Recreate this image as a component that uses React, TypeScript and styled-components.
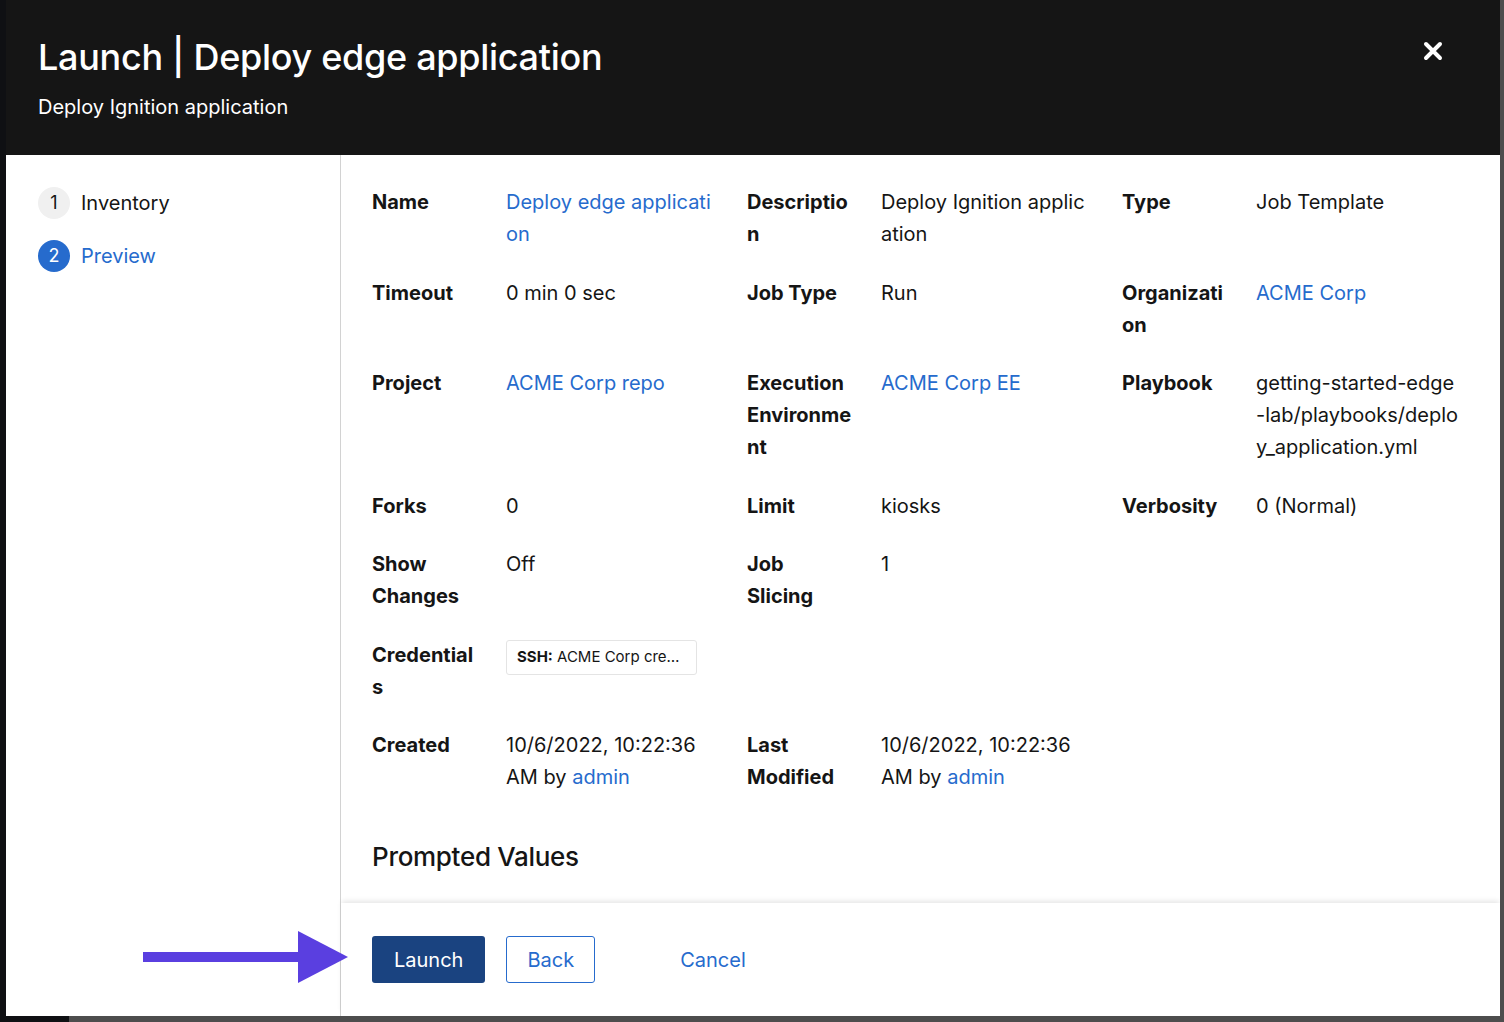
import React from "react";
import styled, { createGlobalStyle } from "styled-components";

const GlobalStyle = createGlobalStyle`
  html, body { margin: 0; padding: 0; }
  body {
    width: 1504px;
    height: 1022px;
    overflow: hidden;
    font-family: Inter, "Open Sans", "Liberation Sans", sans-serif;
    background: linear-gradient(to right, #0f1013 0 69px, #4d4d4d 69px);
  }
  * { box-sizing: border-box; }
`;

const BLUE = "#266bcd";
const TEXT = "#151515";

const Stage = styled.div`
  width: 1504px;
  height: 1022px;
  padding-left: 6px;
  background: linear-gradient(to right, #0f1013 0 6px, transparent 6px);
`;

const Modal = styled.div`
  position: relative;
  width: 1494px;
  height: 1016px;
  background: #fff;
  display: flex;
  flex-direction: column;
  overflow: hidden;
`;

const Header = styled.header`
  flex: none;
  height: 155px;
  background: #151515;
  color: #fff;
  display: flex;
  justify-content: space-between;
  align-items: flex-start;
  padding: 34px 55px 0 32px;
`;

const TitleBlock = styled.div`
  display: flex;
  flex-direction: column;
  gap: 13px;
`;

const Title = styled.h1`
  margin: 0;
  font-size: 36px;
  line-height: 46px;
  font-weight: 500;
  letter-spacing: -0.3px;
`;

const Subtitle = styled.p`
  margin: 0;
  font-size: 20px;
  line-height: 28px;
  font-weight: 400;
`;

const CloseButton = styled.button`
  margin-top: 5px;
  width: 24px;
  height: 24px;
  padding: 0;
  border: 0;
  background: transparent;
  color: #fff;
  display: flex;
  align-items: center;
  justify-content: center;
  cursor: pointer;
`;

const Body = styled.div`
  flex: 1;
  display: flex;
  min-height: 0;
`;

const Nav = styled.nav`
  flex: none;
  width: 335px;
  border-right: 1px solid #d2d2d2;
  padding: 32px 0 0 32px;
  display: flex;
  flex-direction: column;
  gap: 21px;
`;

const Step = styled.div<{ $active?: boolean }>`
  display: flex;
  align-items: center;
  gap: 11px;
  font-size: 20px;
  line-height: 32px;
  color: ${(p) => (p.$active ? BLUE : TEXT)};
`;

const StepNumber = styled.span<{ $active?: boolean }>`
  width: 32px;
  height: 32px;
  border-radius: 50%;
  display: inline-flex;
  align-items: center;
  justify-content: center;
  font-size: 18px;
  background: ${(p) => (p.$active ? BLUE : "#f0f0f0")};
  color: ${(p) => (p.$active ? "#fff" : TEXT)};
`;

const Main = styled.main`
  flex: 1;
  display: flex;
  flex-direction: column;
  min-width: 0;
`;

const Content = styled.div`
  flex: 1;
  overflow: hidden;
  padding: 31px 31px 0 31px;
`;

const DescList = styled.dl`
  margin: 0;
  display: grid;
  grid-template-columns: repeat(3, 340px);
  column-gap: 35px;
  row-gap: 26.5px;
`;

const Group = styled.div<{ $wide?: boolean }>`
  display: grid;
  grid-template-columns: 105px 206px;
  column-gap: 29px;
  align-items: start;
  grid-column: ${(p) => (p.$wide ? "1 / -1" : "auto")};
`;

const Term = styled.dt`
  font-size: 20px;
  line-height: 32px;
  font-weight: 700;
  color: ${TEXT};
  overflow-wrap: anywhere;
`;

const Desc = styled.dd`
  margin: 0;
  font-size: 20px;
  line-height: 32px;
  color: ${TEXT};
  word-break: break-all;
`;

const DateText = styled.span`
  word-break: normal;
`;

const Link = styled.a`
  color: ${BLUE};
  text-decoration: none;
`;

const Chip = styled.span`
  display: inline-flex;
  align-items: center;
  max-width: 191px;
  height: 35px;
  margin-top: 1px;
  vertical-align: top;
  padding: 0 10px;
  border: 1px solid #e4e4e4;
  border-radius: 3px;
  font-size: 15px;
  line-height: 20px;
  color: ${TEXT};
  white-space: nowrap;
  word-break: normal;
`;

const ChipText = styled.span`
  overflow: hidden;
  text-overflow: ellipsis;
  b { font-weight: 700; }
`;

const SectionTitle = styled.h2`
  margin: 47px 0 0 0;
  font-size: 26px;
  line-height: 34px;
  font-weight: 500;
  color: ${TEXT};
  letter-spacing: -0.3px;
`;

const Footer = styled.footer`
  flex: none;
  height: 113px;
  padding: 33px 31px 0 31px;
  display: flex;
  align-items: flex-start;
  gap: 21px;
  background: #fff;
  box-shadow: 0 -3px 5px -1px rgba(3, 3, 3, 0.1);
  position: relative;
`;

const Button = styled.button<{ $variant: "primary" | "secondary" | "link" }>`
  height: 47px;
  padding: 0 ${(p) => (p.$variant === "secondary" ? "20px" : "21px")};
  font-family: inherit;
  font-size: 20px;
  border-radius: 3px;
  cursor: pointer;
  border: 1px solid
    ${(p) => (p.$variant === "secondary" ? BLUE : "transparent")};
  background: ${(p) => (p.$variant === "primary" ? "#1a4380" : "transparent")};
  color: ${(p) => (p.$variant === "primary" ? "#fff" : BLUE)};
  margin-left: ${(p) => (p.$variant === "link" ? "42px" : "0")};
`;

const Arrow = styled.svg`
  position: absolute;
  left: 137px;
  top: 930px;
`;

type Item = { term: string; value: React.ReactNode; wide?: boolean };

const byline = (
  <>
    <DateText>10/6/2022, 10:22:36 AM</DateText> by <Link href="#">admin</Link>
  </>
);

const items: Item[] = [
  { term: "Name", value: <Link href="#">Deploy edge application</Link> },
  { term: "Description", value: "Deploy Ignition application" },
  { term: "Type", value: "Job Template" },
  { term: "Timeout", value: "0 min 0 sec" },
  { term: "Job Type", value: "Run" },
  { term: "Organization", value: <Link href="#">ACME Corp</Link> },
  { term: "Project", value: <Link href="#">ACME Corp repo</Link> },
  { term: "Execution Environment", value: <Link href="#">ACME Corp EE</Link> },
  { term: "Playbook", value: "getting-started-edge-lab/playbooks/deploy_application.yml" },
  { term: "Forks", value: "0" },
  { term: "Limit", value: "kiosks" },
  { term: "Verbosity", value: "0 (Normal)" },
  { term: "Show Changes", value: "Off" },
  { term: "Job Slicing", value: "1" },
  { term: "", value: "" },
  {
    term: "Credentials",
    wide: true,
    value: (
      <Chip>
        <ChipText>
          <b>SSH:</b> ACME Corp credential
        </ChipText>
      </Chip>
    ),
  },
  { term: "Created", value: byline },
  { term: "Last Modified", value: byline },
];

export default function App() {
  return (
    <>
      <GlobalStyle />
      <Stage>
        <Modal>
          <Header>
            <TitleBlock>
              <Title>Launch | Deploy edge application</Title>
              <Subtitle>Deploy Ignition application</Subtitle>
            </TitleBlock>
            <CloseButton aria-label="Close">
              <svg width="20" height="20" viewBox="0 0 20 20">
                <path
                  d="M3 3 L17 17 M17 3 L3 17"
                  stroke="#fff"
                  strokeWidth="4"
                  strokeLinecap="round"
                />
              </svg>
            </CloseButton>
          </Header>
          <Body>
            <Nav>
              <Step>
                <StepNumber>1</StepNumber>
                Inventory
              </Step>
              <Step $active>
                <StepNumber $active>2</StepNumber>
                Preview
              </Step>
            </Nav>
            <Main>
              <Content>
                <DescList>
                  {items.map((it, i) => (
                    <Group key={i} $wide={it.wide}>
                      <Term>{it.term}</Term>
                      <Desc>{it.value}</Desc>
                    </Group>
                  ))}
                </DescList>
                <SectionTitle>Prompted Values</SectionTitle>
              </Content>
              <Footer>
                <Button $variant="primary">Launch</Button>
                <Button $variant="secondary">Back</Button>
                <Button $variant="link">Cancel</Button>
              </Footer>
            </Main>
          </Body>
          <Arrow width="206" height="54" viewBox="0 0 206 54">
            <rect x="0" y="22" width="158" height="10" fill="#5a3fe0" />
            <polygon points="155,1 205,27 155,53" fill="#5a3fe0" />
          </Arrow>
        </Modal>
      </Stage>
    </>
  );
}
